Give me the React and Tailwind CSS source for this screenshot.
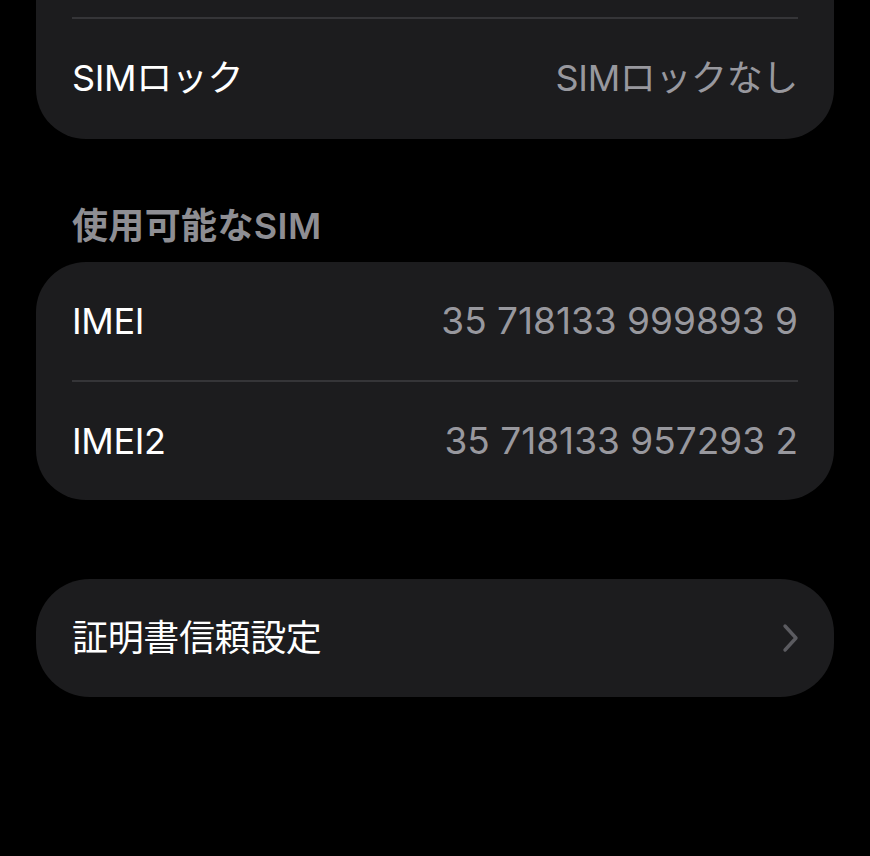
const font = { fontFamily: '"Inter", "Noto Sans CJK JP", sans-serif' };

function Row({ label, value, numeric, chevron }) {
  return (
    <div className="flex h-[118px] items-center justify-between px-[36px]">
      <span className="text-[36px] text-white tracking-[-0.01em]">{label}</span>
      {value && (
        <span className={numeric ? "text-[37px] text-[#98989e]" : "text-[36px] text-[#98989e] tracking-[-0.01em]"}>
          {value}
        </span>
      )}
      {chevron && (
        <svg width="20" height="32" viewBox="0 0 20 32" className="mr-[-3px]">
          <path d="M4 4 L15 16 L4 28" fill="none" stroke="#5b5b60" strokeWidth="3.4" strokeLinecap="round" strokeLinejoin="round" />
        </svg>
      )}
    </div>
  );
}

function Divider() {
  return <div className="mx-[36px] h-[2px] bg-[#353538]" />;
}

export default function App() {
  return (
    <div className="min-h-[856px] w-[870px] bg-black" style={font}>
      <div className="mx-[36px] rounded-b-[50px] bg-[#1c1c1e]">
        <div className="h-[17px]" />
        <Divider />
        <Row label="SIMロック" value="SIMロックなし" />
        <div className="h-[2px]" />
      </div>

      <div className="mt-[67px] mb-[16px] px-[72px] text-[36px] font-semibold leading-[40px] tracking-[0.01em] text-[#8e8e93]">
        使用可能なSIM
      </div>

      <div className="mx-[36px] rounded-[50px] bg-[#1c1c1e]">
        <Row label="IMEI" value="35 718133 999893 9" numeric />
        <Divider />
        <Row label="IMEI2" value="35 718133 957293 2" numeric />
      </div>

      <div className="mx-[36px] mt-[79px] rounded-[54px] bg-[#1c1c1e]">
        <Row label="証明書信頼設定" chevron />
      </div>
    </div>
  );
}
